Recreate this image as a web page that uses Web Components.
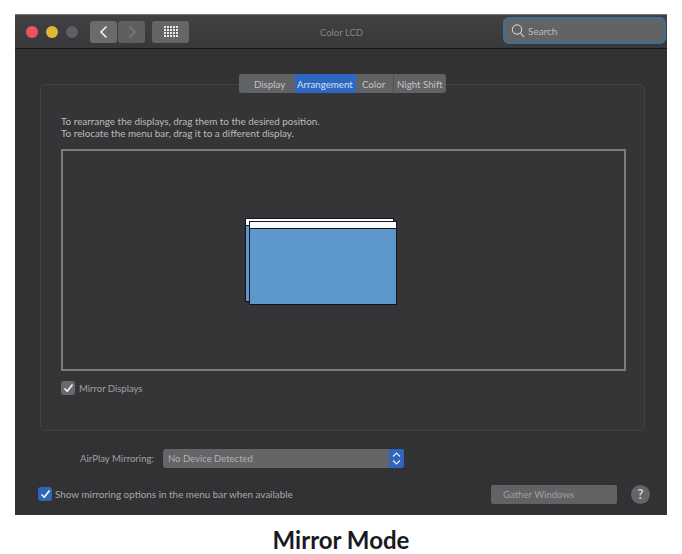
<!DOCTYPE html>
<html><head><meta charset="utf-8"><style>
html,body{margin:0;padding:0;background:#fff}
body{width:682px;height:554px;overflow:hidden;font-family:Lato,"Open Sans",sans-serif}
</style></head><body>
<prefs-page></prefs-page>
<script>
function def(name,css,html){
  customElements.define(name,class extends HTMLElement{
    constructor(){super();const r=this.attachShadow({mode:'open'});r.innerHTML='<style>'+css+'</style>'+html;}
  });
}
def('traffic-lights',`:host{display:flex;gap:8px;align-items:center;margin-right:12px}
 i{display:block;width:12px;height:12px;border-radius:50%}`,
 `<i style="background:#f0525c"></i><i style="background:#e1b43a"></i><i style="background:#5f6064"></i>`);
def('nav-buttons',`:host{display:flex;gap:1px;margin-right:7px}
 b{display:flex;align-items:center;justify-content:center;width:27px;height:22px;background:#6a6b6d;border-radius:3px}
 b+b{background:#5e5f61}`,
 `<b><svg width="12" height="14" viewBox="0 0 12 14"><path d="M8.500 1.500 3 7l5.500 5.500" fill="none" stroke="#f2f2f2" stroke-width="1.600"/></svg></b><b><svg width="12" height="14" viewBox="0 0 12 14"><path d="M3.500 1.500 9 7l-5.500 5.500" fill="none" stroke="#7d7e80" stroke-width="1.400"/></svg></b>`);
def('grid-button',`:host{display:flex;align-items:center;justify-content:center;width:37px;height:22px;background:#646567;border-radius:3px}`,
 `<svg width="14" height="11" viewBox="0 0 14 11" fill="#e8e8e8">${[0,3,6,9].map(y=>[0,3,6,9,12].map(x=>`<rect x="${x}" y="${y}" width="2" height="2"/>`).join('')).join('')}</svg>`);
def('search-field',`:host{display:flex;align-items:center;box-sizing:border-box;width:163px;height:27px;margin:0 1px 2px 0;padding-left:6px;gap:3px;background:#626365;border:2px solid #3e6f98;border-radius:6px;color:#bdbdbd;font-size:10px}`,
 `<svg width="14" height="15" viewBox="0 0 14 15"><circle cx="6" cy="6.500" r="4.700" fill="none" stroke="#e2e2e2" stroke-width="1"/><path d="M9.500 10l3.500 4" stroke="#e2e2e2" stroke-width="1.100"/></svg><span>Search</span>`);
def('title-bar',`:host{display:flex;align-items:center;box-sizing:border-box;height:34px;padding:0 0 0 11px;background:linear-gradient(#414143,#38383a);border-bottom:1px solid #17171a;flex:none}
 .t{flex:1;text-align:center;color:#858587;font-size:9.500px;padding-top:1px;padding-right:9px}`,
 `<traffic-lights></traffic-lights><nav-buttons></nav-buttons><grid-button></grid-button><div class="t">Color LCD</div><search-field></search-field>`);
def('tab-bar',`:host{display:flex;height:19px;align-self:flex-start;margin-left:224px;border-radius:3px;overflow:hidden;font-size:9.700px;color:#c4c4c4;background:#616264;margin-bottom:-9px;position:relative;z-index:1;line-height:21px}
 span{display:block;box-sizing:border-box;white-space:nowrap}
 .a{background:#2e67c2;color:#d4e0f2}`,
 `<span style="width:56px;padding-left:15px">Display</span><span class="a" style="width:61px;padding-left:2px">Arrangement</span><span style="width:37px;padding-left:6px">Color</span><span style="width:53px;padding-left:3px;border-left:1px solid #4f5052">Night Shift</span>`);
def('display-canvas',`:host{display:block;box-sizing:border-box;height:222px;border:2px solid #7b7c7e;background:#353537;position:relative}
 .d{position:absolute;box-sizing:border-box;background:#5d97cc;border:1px solid #12161c;}
 .d::before{content:"";display:block;height:6px;background:#fff;border-bottom:1px solid #12161c}`,
 `<div class="d" style="left:182px;top:67px;width:149px;height:84px"></div><div class="d" style="left:186px;top:70px;width:148px;height:84px"></div>`);
def('check-box',`:host{display:inline-flex;align-items:center;justify-content:center;width:14px;height:14px;border-radius:3px;background:var(--bg,#69696b);flex:none}`,
 `<svg width="11" height="10" viewBox="0 0 11 10"><path d="M1.500 5.500 4.300 8.300 9.500 1.500" fill="none" stroke="#f4f4f4" stroke-width="1.700"/></svg>`);
def('arrange-panel',`:host{display:flex;flex-direction:column;box-sizing:border-box;height:347px;margin:0 22px 0 25px;padding:30px 18px 0 20px;border:1px solid #444446;border-radius:5px;background:#353537;font-size:9.900px;color:#bcbcbc}
 p{margin:0 0 10px;line-height:12px;white-space:nowrap}
 .m{display:flex;align-items:center;gap:4px;margin-top:10px;color:#a0a0a2;font-size:9.500px}`,
 `<p>To rearrange the displays, drag them to the desired position.<br>To relocate the menu bar, drag it to a different display.</p><display-canvas></display-canvas><div class="m"><check-box></check-box><span>Mirror Displays</span></div>`);
def('airplay-row',`:host{display:flex;align-items:center;height:19px;margin-top:18px;padding-left:65px;font-size:9.600px;color:#a0a0a2}
 .l{width:83px;white-space:nowrap}
 .s{display:flex;align-items:center;justify-content:space-between;width:241px;height:19px;background:#646567;border-radius:3px;overflow:hidden;padding-left:5px;box-sizing:border-box;color:#b0b0b2;font-size:9.500px}
 .b{display:flex;align-items:center;justify-content:center;width:15px;height:19px;background:#2f66bb}`,
 `<span class="l">AirPlay Mirroring:</span><div class="s"><span>No Device Detected</span><span class="b"><svg width="9" height="15" viewBox="0 0 9 15" fill="none" stroke="#e8eef8" stroke-width="1.200"><path d="M1 5.500 4.500 2 8 5.500M1 9.500 4.500 13 8 9.500"/></svg></span></div>`);
def('footer-row',`:host{display:flex;align-items:center;height:20px;margin-top:16px;padding:0 17px 0 23px;font-size:9.900px;color:#a8a8aa;--bg:#2f66bb}
 .t{margin-left:3px;flex:1;white-space:nowrap}
 .g{box-sizing:border-box;width:126px;height:19px;line-height:19px;padding-left:12px;background:#616264;border-radius:2px;color:#a0a0a2;font-size:9.600px}
 .h{width:19px;height:19px;border-radius:50%;background:#646567;color:#d4d4d4;margin-left:14px;text-align:center;line-height:19px;font-size:13px;font-weight:700}`,
 `<check-box></check-box><span class="t">Show mirroring options in the menu bar when available</span><span class="g">Gather Windows</span><span class="h">?</span>`);
def('prefs-window',`:host{display:flex;flex-direction:column;box-sizing:border-box;width:652px;height:501px;margin:14px 0 0 15px;background:#323234;border-top:1px solid #77777a}
 .body{display:flex;flex-direction:column;padding-top:25px}`,
 `<title-bar></title-bar><div class="body"><tab-bar></tab-bar><arrange-panel></arrange-panel><airplay-row></airplay-row><footer-row></footer-row></div>`);
def('prefs-page',`:host{display:block}
 .c{text-align:center;font:700 24px/30px Lato,sans-serif;color:#191a1e;margin-top:10px}`,
 `<prefs-window></prefs-window><div class="c">Mirror Mode</div>`);
</script>
</body></html>
